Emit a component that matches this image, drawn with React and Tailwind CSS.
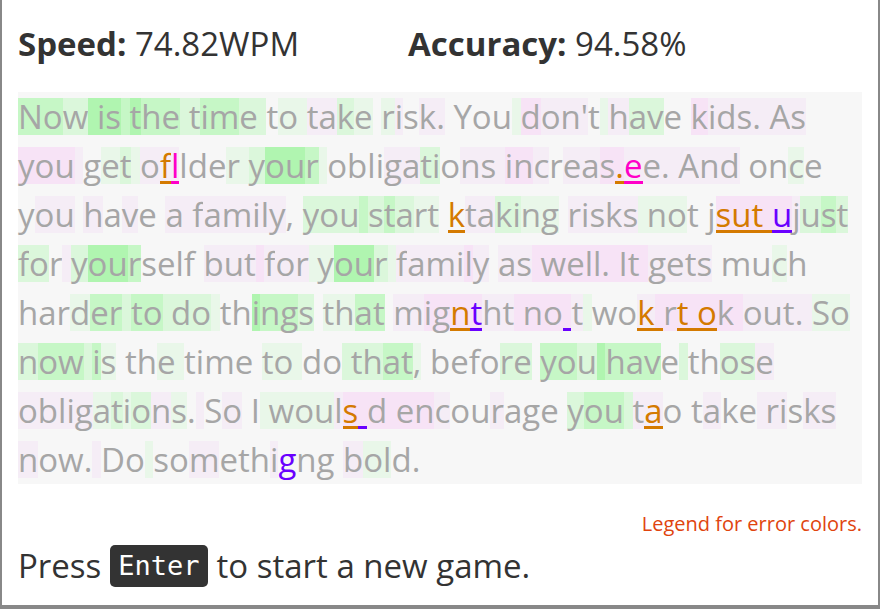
import React from 'react';

const bgFor = {
    '3': 'bg-[#b0f5b0]',
    '2': 'bg-[#c6f7c6]',
    '1': 'bg-[#dbf7db]',
    '0': 'bg-[#e9f7e9]',
    'a': 'bg-[#f5edf6]',
    'b': 'bg-[#f7e3f6]',
    '.': '',
};

const errFor = {
    O: 'text-[#d47a00] shadow-[inset_0_-3px_0_#d47a00]',
    M: 'text-[#ff00c8] shadow-[inset_0_-3px_0_#ff00c8]',
    U: 'text-[#6a00ff] shadow-[inset_0_-3px_0_#6a00ff]',
    V: 'text-[#6a00ff]',
};

const lines = [
    {
        text: "Now is the time to take risk. You don't have kids. As",
        heat: "2213332322112211.00aa10.0a.aa....0baaa.0a11..baaaaaaa",
        errors: {},
    },
    {
        text: "you get ofllder your obligations increas.ee. And once",
        heat: "bbba.010aaa...0013320....aa11.aaabba.aabbaaaaaaa...0.",
        errors: { 9: 'O', 10: 'M', 40: 'O', 41: 'M' },
    },
    {
        text: "you have a family, you start ktaking risks not jsut ujust",
        heat: ".aa.a.a..aaaaaaaa..111212100..aa1100.aaaaa000...bbbbba121",
        errors: { 29: 'O', 48: 'O', 49: 'O', 50: 'O', 51: 'O', 52: 'U' },
    },
    {
        text: "for yourself but for your family as well. It gets much",
        heat: "11.a1332.....aaabaaa003310aaaaba.aabbbbbbbbbbaaaa...0.",
        errors: {},
    },
    {
        text: "harder to do things that migntht no t wok rt ok out. So",
        heat: "...0221221110..3221.0022.abbbbaabbbba0..abbbbbbbaaaaa00",
        errors: { 28: 'O', 29: 'U', 35: 'U', 40: 'O', 41: 'O', 43: 'O', 44: 'O', 45: 'O' },
    },
    {
        text: "now is the time to do that, before you have those",
        heat: "122120...00.....000..111220.....11.2213222.1..11a",
        errors: {},
    },
    {
        text: "obligations. So I wouls d encourage you tao take risks",
        heat: "aaaaa0101a0.a.a..0000abbbbbba..a....1221aa...a..aaa.aa",
        errors: { 22: 'O', 23: 'U', 41: 'O' },
    },
    {
        text: "now. Do somethigng bold.",
        heat: "a...a..0..a...a....a00..",
        errors: { 15: 'V' },
    },
];

function Line({ line }) {
    return (
        <div className="h-[49px] leading-[49px] whitespace-pre">
            {line.text.split('').map((ch, i) => {
                const err = line.errors[i];
                const bg = bgFor[line.heat[i] || '.'] || '';
                return (
                    <span key={i} className={'inline-block h-[37px] leading-[37px] ' + bg + ' ' + (err ? errFor[err] : '')}>
                        {ch}
                    </span>
                );
            })}
        </div>
    );
}

export default function App() {
    return (
        <div className="bg-white w-[880px] h-[610px] overflow-hidden font-['Open_Sans',sans-serif]">
            <div className="h-[609px] border-x-2 border-b-4 border-[#888888] px-[16px]">
                <div className="h-[88px] flex items-center text-[33px] text-[#333333]">
                    <div className="w-[390px]">
                        <span className="font-bold">Speed:</span> 74.82WPM
                    </div>
                    <div>
                        <span className="font-bold">Accuracy:</span> 94.58%
                    </div>
                </div>

                <div className="mt-[4px] bg-[#f7f7f7] text-[33px] text-[#a6a6a6]">
                    {lines.map((line, i) => (
                        <Line key={i} line={line}></Line>
                    ))}
                </div>

                <div className="mt-[26px] text-right text-[20px] leading-[28px] text-[#e0440e]">
                    Legend for error colors.
                </div>

                <div className="mt-[7px] flex items-center h-[42px] text-[33px] text-[#333333]">
                    <span>Press</span>
                    <kbd className="mx-[9px] h-[42px] px-[8px] flex items-center rounded-[5px] bg-[#333333] text-white text-[27px] font-['DejaVu_Sans_Mono',monospace]">
                        Enter
                    </kbd>
                    <span>to start a new game.</span>
                </div>
            </div>
        </div>
    );
}
